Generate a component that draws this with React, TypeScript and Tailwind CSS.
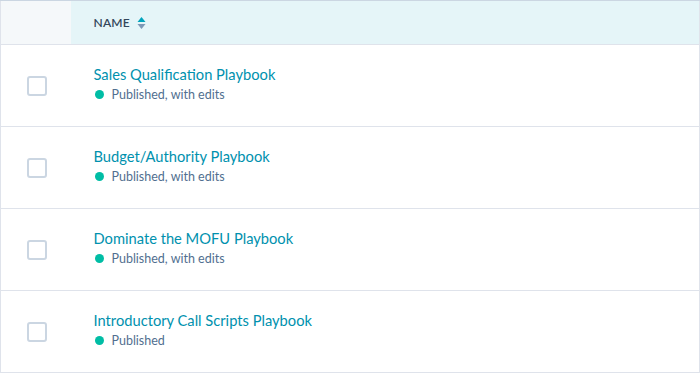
const playbooks = [
  { id: 1, name: "Sales Qualification Playbook", status: "Published, with edits" },
  { id: 2, name: "Budget/Authority Playbook", status: "Published, with edits" },
  { id: 3, name: "Dominate the MOFU Playbook", status: "Published, with edits" },
  { id: 4, name: "Introductory Call Scripts Playbook", status: "Published" },
];

function SortIcon() {
  return (
    <svg width="9" height="14" viewBox="0 0 9 14" className="ml-[7px]">
      <path d="M4.5 1 L8.5 6 L0.5 6 Z" fill="#00a4bd" />
      <path d="M0.5 8 L8.5 8 L4.5 13 Z" fill="#7c98b6" />
    </svg>
  );
}

export default function App() {
  return (
    <div className="w-[700px] h-[373px] bg-white font-['Lato',sans-serif]">
      <table className="w-full border-collapse border border-[#dfe3eb]">
        <thead>
          <tr className="h-[44px] border-b border-[#dfe3eb]">
            <th className="w-[70px] bg-[#f5f8fa] border-t border-[#cbd6e2]"></th>
            <th className="bg-[#e5f5f8] border-t border-[#cbd6e2] pl-[23px] text-left">
              <div className="flex items-center text-[12px] font-semibold text-[#33475b] tracking-[0.2px]">
                NAME
                <SortIcon />
              </div>
            </th>
          </tr>
        </thead>
        <tbody>
          {playbooks.map(p => (
            <tr key={p.id} className="h-[82px] border-b border-[#dfe3eb]">
              <td className="w-[70px] align-middle">
                <div className="ml-[26px] w-[20px] h-[20px] rounded-[3px] border-2 border-[#cbd6e2] bg-white" />
              </td>
              <td className="pl-[23px] align-middle">
                <div className="text-[14.7px] text-[#0091ae] leading-[18px] -mt-[4px]">{p.name}</div>
                <div className="flex items-center mt-[4px]">
                  <span className="w-[9px] h-[9px] rounded-full bg-[#00bda5] ml-[1px] mr-[8px]" />
                  <span className="text-[12.5px] text-[#516f90] leading-[16px]">{p.status}</span>
                </div>
              </td>
            </tr>
          ))}
        </tbody>
      </table>
    </div>
  );
}
